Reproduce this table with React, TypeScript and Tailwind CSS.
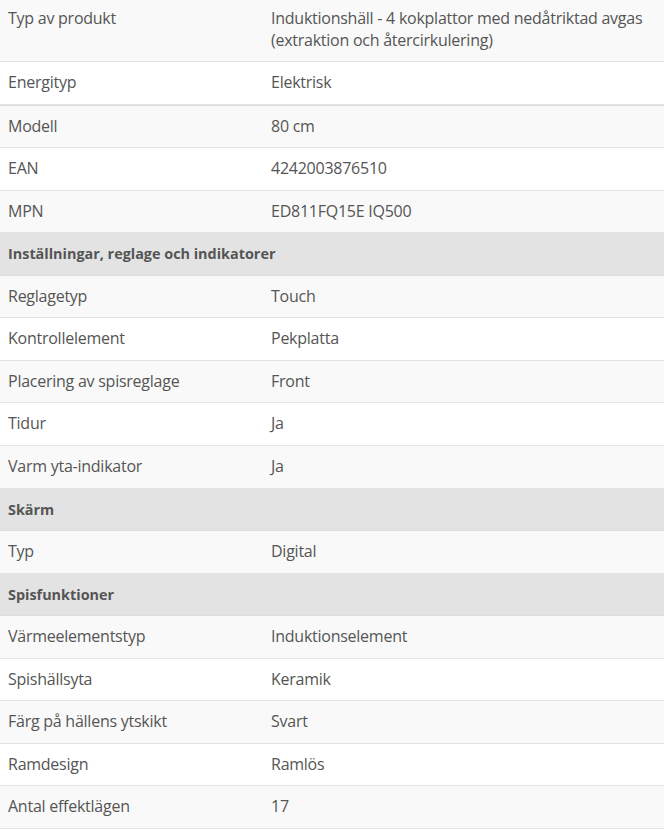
import React from 'react';

type Row = { label: string; value?: string; header?: boolean };

// Grupper av rader, varje grupp börjar med grå rad
const groups: Row[][] = [
  [
    { label: 'Typ av produkt', value: 'Induktionshäll - 4 kokplattor med nedåtriktad avgas (extraktion och återcirkulering)' },
    { label: 'Energityp', value: 'Elektrisk' },
  ],
  [
    { label: 'Modell', value: '80 cm' },
    { label: 'EAN', value: '4242003876510' },
    { label: 'MPN', value: 'ED811FQ15E IQ500' },
  ],
  [{ label: 'Inställningar, reglage och indikatorer', header: true }],
  [
    { label: 'Reglagetyp', value: 'Touch' },
    { label: 'Kontrollelement', value: 'Pekplatta' },
    { label: 'Placering av spisreglage', value: 'Front' },
    { label: 'Tidur', value: 'Ja' },
    { label: 'Varm yta-indikator', value: 'Ja' },
  ],
  [{ label: 'Skärm', header: true }],
  [{ label: 'Typ', value: 'Digital' }],
  [{ label: 'Spisfunktioner', header: true }],
  [
    { label: 'Värmeelementstyp', value: 'Induktionselement' },
    { label: 'Spishällsyta', value: 'Keramik' },
    { label: 'Färg på hällens ytskikt', value: 'Svart' },
    { label: 'Ramdesign', value: 'Ramlös' },
    { label: 'Antal effektlägen', value: '17' },
  ],
];

const App: React.FC = () => {
  return (
    <div className="w-[664px] bg-white text-[#555] font-['Open_Sans',sans-serif] text-[16px] leading-[21.55px] -mt-[2px]">
      {groups.map((group, gi) => (
        <div key={gi} className={gi === 1 ? 'border-t border-[#dcdcdc]' : ''}>
          {group.map((row, ri) =>
            row.header ? (
              <div
                key={ri}
                className="bg-[#e3e3e3] border-b border-[#dedede] px-[8px] py-[10px] text-[14.4px] font-bold"
              >
                {row.label}
              </div>
            ) : (
              <div
                key={ri}
                className={`grid grid-cols-[263px_1fr] border-b border-[#e3e3e3] px-[8px] py-[10px] tracking-[-0.25px] ${
                  ri % 2 === 0 ? 'bg-[#f9f9f9]' : 'bg-white'
                }`}
              >
                <div>{row.label}</div>
                <div className="pr-[8px]">{row.value}</div>
              </div>
            )
          )}
        </div>
      ))}
    </div>
  );
};

export default App;
